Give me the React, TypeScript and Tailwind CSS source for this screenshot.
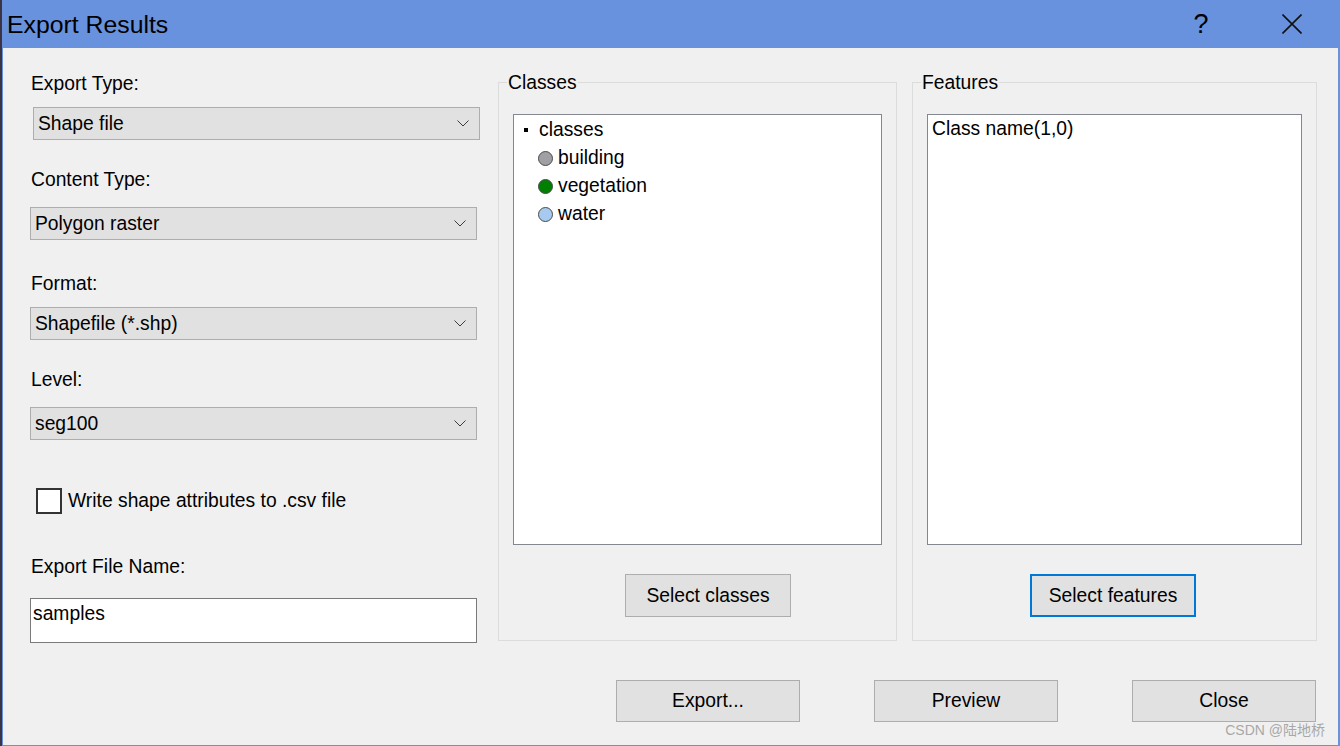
const font = { fontFamily: '"Liberation Sans", Arial, sans-serif' };

function Chevron() {
  return (
    <svg width="12" height="7" viewBox="0 0 12 7" className="shrink-0">
      <path d="M0.5 0.5 L6 6 L11.5 0.5" fill="none" stroke="#3c3c3c" strokeWidth="1" />
    </svg>
  );
}

function Dropdown({ value, className = '' }: { value: string; className?: string }) {
  return (
    <div
      className={`flex h-[33px] w-[447px] items-center justify-between border border-[#adadad] bg-[#e1e1e1] pl-[4px] pr-[10px] text-[19.3px] leading-[24px] text-black ${className}`}
    >
      <span>{value}</span>
      <Chevron />
    </div>
  );
}

function Label({ text, className = '' }: { text: string; className?: string }) {
  return <div className={`h-[24px] text-[19.3px] leading-[24px] text-black ${className}`}>{text}</div>;
}

function Button({ text, className = '' }: { text: string; className?: string }) {
  return (
    <div
      className={`flex items-center justify-center border border-[#adadad] bg-[#e1e1e1] text-[19.3px] leading-[24px] text-black ${className}`}
    >
      {text}
    </div>
  );
}

const classes = [
  { name: 'building', color: '#a0a0a4' },
  { name: 'vegetation', color: '#008000' },
  { name: 'water', color: '#a6caf0' },
];

export default function App() {
  return (
    <div className="relative flex h-[746px] w-[1340px] overflow-hidden bg-[#f0f0f0]" style={font}>
      {/* desktop behind the window */}
      <div className="w-[2px] shrink-0 bg-[#3a3444]" />

      <div className="flex flex-1 flex-col border-b border-l border-r-2 border-[#6891de]">
        {/* title bar */}
        <div className="flex h-[48px] shrink-0 items-center bg-[#6891de] pl-[4px]">
          <span className="mt-[2px] text-[24.8px] leading-[30px] text-black">Export Results</span>
          <span className="ml-auto w-[20px] text-center text-[27px] leading-[30px] text-black">?</span>
          <svg width="20" height="20" viewBox="0 0 20 20" className="ml-[71px] mr-[36px]">
            <path d="M0.5 0.5 L19.5 19.5 M19.5 0.5 L0.5 19.5" stroke="#111" strokeWidth="1.6" />
          </svg>
        </div>

        {/* body */}
        <div className="flex flex-1 flex-col bg-[#f0f0f0]">
          <div className="flex items-start pl-[27px]">
            {/* left column */}
            <div className="flex w-[450px] shrink-0 flex-col">
              <Label text="Export Type:" className="mt-[24px] ml-[1px]" />
              <Dropdown value="Shape file" className="mt-[11px] ml-[3px]" />
              <Label text="Content Type:" className="mt-[28px] ml-[1px]" />
              <Dropdown value="Polygon raster" className="mt-[15px]" />
              <Label text="Format:" className="mt-[32px] ml-[1px]" />
              <Dropdown value="Shapefile (*.shp)" className="mt-[11px]" />
              <Label text="Level:" className="mt-[28px] ml-[1px]" />
              <Dropdown value="seg100" className="mt-[15px]" />

              <div className="mt-[48px] flex h-[26px] items-center">
                <div className="ml-[6px] h-[26px] w-[26px] border-2 border-[#333333] bg-white" />
                <span className="ml-[6px] text-[19.3px] leading-[24px] text-black">
                  Write shape attributes to .csv file
                </span>
              </div>

              <Label text="Export File Name:" className="mt-[41px] ml-[1px]" />
              <div className="mt-[19px] h-[45px] w-[447px] border border-[#7a7a7a] bg-white pl-[2px] pt-[3px] text-[19.3px] leading-[24px] text-black">
                samples
              </div>
            </div>

            {/* classes group */}
            <div className="ml-[18px] mt-[34px] flex h-[559px] w-[399px] shrink-0 flex-col border border-[#dcdcdc]">
              <div className="-mt-[12px] ml-[8px] h-[24px] w-fit bg-[#f0f0f0] px-[1px] text-[19.3px] leading-[24px] text-black">
                Classes
              </div>
              <div className="ml-[14px] mt-[19px] h-[431px] w-[369px] border border-[#828790] bg-white pt-[1px] text-[19.3px] leading-[28px] text-black">
                <div className="flex h-[28px] items-center">
                  <span className="ml-[10px] h-[4px] w-[4px] bg-black" />
                  <span className="ml-[11px]">classes</span>
                </div>
                {classes.map((c) => (
                  <div key={c.name} className="flex h-[28px] items-center">
                    <span
                      className="ml-[24px] h-[15px] w-[15px] rounded-full border border-[#4a4a4a]"
                      style={{ backgroundColor: c.color }}
                    />
                    <span className="ml-[5px]">{c.name}</span>
                  </div>
                ))}
              </div>
              <Button text="Select classes" className="ml-[126px] mt-[29px] h-[43px] w-[166px]" />
            </div>

            {/* features group */}
            <div className="ml-[15px] mt-[34px] flex h-[559px] w-[405px] shrink-0 flex-col border border-[#dcdcdc]">
              <div className="-mt-[12px] ml-[8px] h-[24px] w-fit bg-[#f0f0f0] px-[1px] text-[19.3px] leading-[24px] text-black">
                Features
              </div>
              <div className="ml-[14px] mt-[19px] h-[431px] w-[375px] border border-[#828790] bg-white pl-[4px] pt-[2px] text-[19.3px] leading-[24px] text-black">
                Class name(1,0)
              </div>
              <Button
                text="Select features"
                className="ml-[117px] mt-[29px] h-[43px] w-[166px] !border-2 !border-[#0078d7]"
              />
            </div>
          </div>

          {/* bottom buttons */}
          <div className="mt-[37px] flex pl-[613px]">
            <Button text="Export..." className="h-[42px] w-[184px]" />
            <Button text="Preview" className="ml-[74px] h-[42px] w-[184px]" />
            <Button text="Close" className="ml-[74px] h-[42px] w-[184px]" />
          </div>
        </div>
      </div>

      <div
        className="absolute bottom-[8px] right-[15px] text-[14px] leading-[16px] text-[#a8a8a8]"
        style={{ fontFamily: '"Liberation Sans", "Noto Sans CJK SC", sans-serif' }}
      >
        CSDN @陆地桥
      </div>
    </div>
  );
}
